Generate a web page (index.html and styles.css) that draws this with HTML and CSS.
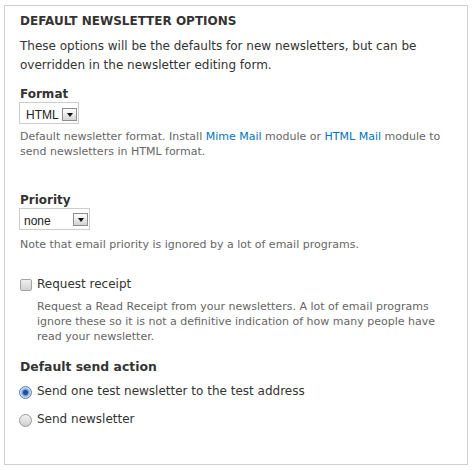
FILE: index.html
```html
<!DOCTYPE html>
<html lang="en">
<head>
<meta charset="utf-8">
<title>Default newsletter options</title>
<link rel="stylesheet" href="styles.css">
</head>
<body>
<div class="panel">
  <h2 class="legend">DEFAULT NEWSLETTER OPTIONS</h2>
  <p class="intro">These options will be the defaults for new newsletters, but can be overridden in the newsletter editing form.</p>

  <div class="item item-format">
    <label class="label">Format</label>
    <div class="select select-format">
      <span class="select-value">HTML</span>
      <span class="select-btn"><span class="arrow"></span></span>
    </div>
    <p class="desc">Default newsletter format. Install <a href="#">Mime Mail</a> module or <a href="#">HTML Mail</a> module to send newsletters in HTML format.</p>
  </div>

  <div class="item item-priority">
    <label class="label">Priority</label>
    <div class="select select-priority">
      <span class="select-value">none</span>
      <span class="select-btn"><span class="arrow"></span></span>
    </div>
    <p class="desc">Note that email priority is ignored by a lot of email programs.</p>
  </div>

  <div class="item item-receipt">
    <div class="check-row">
      <span class="checkbox"></span>
      <span class="check-label">Request receipt</span>
    </div>
    <p class="desc desc-indent">Request a Read Receipt from your newsletters. A lot of email programs ignore these so it is not a definitive indication of how many people have read your newsletter.</p>
  </div>

  <div class="item item-action">
    <div class="group-title">Default send action</div>
    <div class="radio-row radio-row-first">
      <span class="radio radio-checked"></span>
      <span class="radio-label">Send one test newsletter to the test address</span>
    </div>
    <div class="radio-row radio-row-second">
      <span class="radio"></span>
      <span class="radio-label">Send newsletter</span>
    </div>
  </div>
</div>
</body>
</html>
```

FILE: styles.css
```css
html, body {
  margin: 0;
  padding: 0;
  background: #fff;
}

body {
  font-family: "DejaVu Sans", Verdana, sans-serif;
  font-size: 12px;
  color: #333;
}

.panel {
  margin: 5px 0 0 4px;
  width: 464px;
  border: 1px solid #cfcfcf;
  padding: 6px 15px 36px 15px;
  box-sizing: border-box;
}

.legend {
  margin: 0;
  font-size: 12px;
  font-weight: bold;
  line-height: 18px;
  color: #333;
}

.intro {
  margin: 7px 0 0;
  line-height: 18.5px;
  color: #333;
}

.item-format {
  margin-top: 13px;
}

.item-priority {
  margin-top: 34px;
}

.label {
  display: block;
  font-weight: bold;
  line-height: 15px;
  color: #333;
}

.select {
  display: flex;
  align-items: flex-start;
  justify-content: space-between;
  height: 22px;
  box-sizing: border-box;
  border: 1px solid #cdcdcd;
  background: #fff;
  margin-left: -1px;
}

.select-format {
  width: 60px;
}

.select-priority {
  width: 71px;
}

.select-value {
  font-family: "Liberation Sans", Arial, sans-serif;
  font-size: 12px;
  line-height: 14px;
  color: #222;
  padding: 5px 0 0 6px;
}

.select-priority .select-value {
  padding-left: 4px;
}

.select-btn {
  display: flex;
  align-items: center;
  justify-content: center;
  width: 15px;
  height: 13px;
  box-sizing: border-box;
  margin: 5px 1px 0 0;
  border: 1px solid #8e8e8e;
  background: linear-gradient(#ffffff, #d4d4d4);
}

.select-priority .select-btn {
  margin-top: 4px;
}

.arrow {
  width: 0;
  height: 0;
  border-left: 3.5px solid transparent;
  border-right: 3.5px solid transparent;
  border-top: 4px solid #111;
}

.desc {
  margin: 5px 0 0;
  font-size: 11px;
  line-height: 15px;
  color: #666;
}

.item-priority .desc {
  margin-top: 7px;
}

.desc a {
  color: #0074bd;
  text-decoration: none;
}

.desc-indent {
  margin: 6px 0 0 17px;
}

.item-receipt {
  margin-top: 23px;
}

.check-row,
.radio-row {
  display: flex;
  align-items: flex-start;
  line-height: 18px;
}

.checkbox {
  flex: none;
  width: 12px;
  height: 12px;
  box-sizing: border-box;
  margin: 4px 5px 0 0;
  border: 1px solid #a4a4a4;
  border-radius: 2px;
  background: linear-gradient(#f0f0f0, #d2d2d2);
}

.check-label,
.radio-label {
  color: #333;
}

.item-action {
  margin-top: 14px;
}

.group-title {
  font-size: 12.4px;
  font-weight: bold;
  line-height: 18px;
  color: #333;
}

.radio-row-first {
  margin-top: 6px;
}

.radio-row-second {
  margin-top: 10px;
}

.radio {
  flex: none;
  width: 13px;
  height: 13px;
  box-sizing: border-box;
  margin: 4px 5px 0 -1px;
  border: 1px solid #9a9a9a;
  border-radius: 50%;
  background: linear-gradient(#f2f2f2, #cfcfcf);
}

.radio-checked {
  border-color: #5d7ea6;
  background: radial-gradient(circle at 50% 50%, #1e4f93 0, #1e4f93 2px, #6d9bd6 3px, #b9cfe9 4.5px, #e6eef8 6px);
}
```
